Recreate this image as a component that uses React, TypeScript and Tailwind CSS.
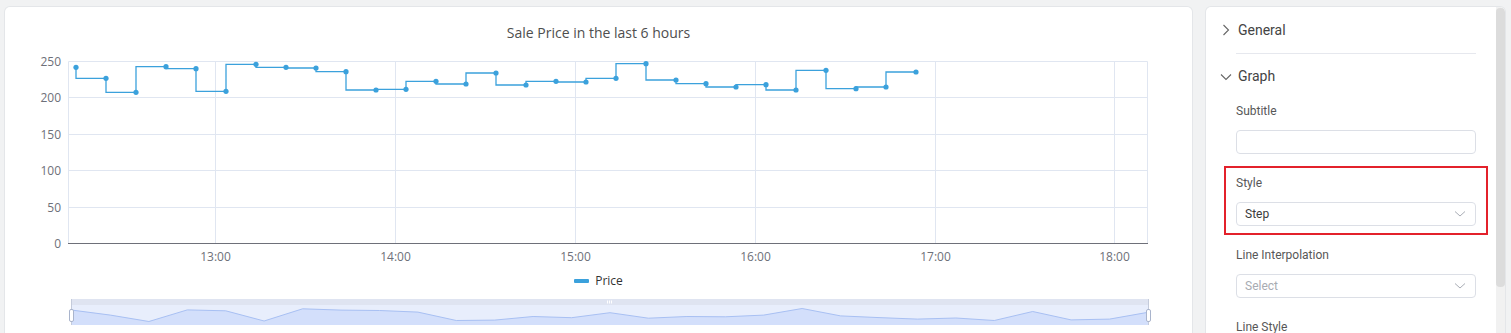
import React from "react";

const ys = [67.3, 78.3, 92.3, 66.7, 68.7, 91.3, 64.3, 67.3, 68, 71.7, 90, 89.3, 81.3, 84, 73, 85, 81.3, 82, 78.3, 63.7, 80, 83.7, 87, 84.7, 90, 70.3, 88.7, 87, 72];
const xs = ys.map((_, i) => 76 + i * 30);

const hLines = [
  { y: 61.5, label: "250" },
  { y: 97.5, label: "200" },
  { y: 134.5, label: "150" },
  { y: 170.5, label: "100" },
  { y: 207.5, label: "50" },
];
const vLines = [
  { x: 215.5, label: "13:00" },
  { x: 395.5, label: "14:00" },
  { x: 575.5, label: "15:00" },
  { x: 755.5, label: "16:00" },
  { x: 935.5, label: "17:00" },
  { x: 1114.5, label: "18:00" },
];

function SelectChevron() {
  return (
    <svg width="12" height="8" viewBox="0 0 12 8" className="shrink-0">
      <polyline points="1,1.5 6,6 11,1.5" fill="none" stroke="#a9adb5" strokeWidth="1" />
    </svg>
  );
}

function FieldLabel({ children }: { children: React.ReactNode }) {
  return <div className="h-[16px] leading-[16px] text-[12px] text-[#575757]">{children}</div>;
}

export default function App() {
  const linePath = ys
    .map((y, i) => (i === 0 ? `M${xs[0]} ${y}` : `V${y}H${xs[i]}`))
    .join("");
  const sx = (i: number) => 72 + i * (1076 / 28);
  const sy = (y: number) => 308.5 + ((y - 63.7) / 28.6) * 13;
  const sliderLine = ys
    .map((y, i) => `${i ? "L" : "M"}${sx(i).toFixed(1)} ${sy(y).toFixed(1)}`)
    .join("");
  const sliderArea = sliderLine + "L1148 325L72 325Z";

  return (
    <div
      className="h-[333px] w-[1511px] overflow-hidden bg-[#f1f2f3] pt-[7px] pl-[5px] flex gap-[14px]"
      style={{ fontFamily: "'Open Sans', 'Liberation Sans', sans-serif" }}
    >
      {/* Chart card */}
      <div className="w-[1187px] h-[360px] shrink-0 bg-white rounded-[5px] ring-1 ring-[#e4e6e9] flex flex-col">
        <div className="pt-[16px] h-[36px] leading-[20px] text-center text-[14px] text-[#4e4e4e]">
          Sale Price in the last 6 hours
        </div>
        <svg width="1187" height="222" className="block">
          <g transform="translate(-5 -43)">
            {hLines.map((l) => (
              <line key={l.y} x1="68.5" x2="1147.5" y1={l.y} y2={l.y} stroke="#e0e6f1" strokeWidth="1" />
            ))}
            <line x1="68.5" x2="68.5" y1="61.5" y2="243.5" stroke="#e0e6f1" />
            {vLines.map((l) => (
              <line key={l.x} x1={l.x} x2={l.x} y1="61.5" y2="243.5" stroke="#e0e6f1" />
            ))}
            <line x1="1147.5" x2="1147.5" y1="61.5" y2="243.5" stroke="#e0e6f1" />
            <line x1="68" x2="1148" y1="243.5" y2="243.5" stroke="#6e7079" strokeWidth="1" />
            {hLines.map((l) => (
              <text key={"t" + l.y} x="61" y={l.y + 4} textAnchor="end" fontSize="12" fill="#6e7079">
                {l.label}
              </text>
            ))}
            <text x="61" y="247.5" textAnchor="end" fontSize="12" fill="#6e7079">
              0
            </text>
            {vLines.map((l) => (
              <text key={"x" + l.x} x={l.x} y="261" textAnchor="middle" fontSize="12" fill="#6e7079">
                {l.label}
              </text>
            ))}
            <path d={linePath} fill="none" stroke="#3ba1dc" strokeWidth="1.3" />
            {ys.map((y, i) => (
              <circle key={i} cx={xs[i]} cy={y} r="2.6" fill="#3ba1dc" />
            ))}
          </g>
        </svg>
        <div className="mt-[8px] h-[16px] flex items-center justify-center gap-[6px]">
          <div className="w-[15px] h-[4px] rounded-[1px] bg-[#3ba1dc]" />
          <span className="text-[12px] leading-[16px] text-[#333]">Price</span>
        </div>
        <svg width="1187" height="32" className="block mt-[8px]">
          <g transform="translate(-5 -297)">
            <rect x="71" y="299" width="1078" height="6" fill="#dfe4f1" />
            <rect x="71" y="305" width="1078" height="20" fill="#e8eefc" />
            <path d={sliderArea} fill="#d3dffb" />
            <path d={sliderLine} fill="none" stroke="#a8c0f3" strokeWidth="1" />
            <line x1="71.5" x2="71.5" y1="299" y2="325" stroke="#c4cbdb" />
            <line x1="1148.5" x2="1148.5" y1="299" y2="325" stroke="#c4cbdb" />
            <line x1="607.5" x2="607.5" y1="300.5" y2="303.5" stroke="#ffffff" />
            <line x1="609.5" x2="609.5" y1="300.5" y2="303.5" stroke="#ffffff" />
            <line x1="611.5" x2="611.5" y1="300.5" y2="303.5" stroke="#ffffff" />
            <rect x="69.5" y="309.5" width="4" height="12" rx="1.5" fill="#ffffff" stroke="#a9b4cc" />
            <rect x="1146.5" y="309.5" width="4" height="12" rx="1.5" fill="#ffffff" stroke="#a9b4cc" />
          </g>
        </svg>
      </div>

      {/* Settings panel */}
      <div
        className="w-[299px] h-[360px] shrink-0 bg-white rounded-[5px] ring-1 ring-[#e4e6e9] flex overflow-hidden"
        style={{ fontFamily: "Roboto, 'Noto Sans', sans-serif" }}
      >
        <div className="w-[290px] shrink-0 flex flex-col">
          <div className="h-[46px] flex items-center pl-[14px] gap-[6px]">
            <svg width="12" height="12" viewBox="0 0 12 12">
              <polyline points="3.5,1 8.5,6 3.5,11" fill="none" stroke="#666" strokeWidth="1.1" />
            </svg>
            <span className="text-[14px] text-[#444]">General</span>
          </div>
          <div className="ml-[30px] mr-[20px] h-px bg-[#e6e8ee]" />
          <div className="h-[45px] flex items-center pl-[14px] gap-[6px]">
            <svg width="12" height="12" viewBox="0 0 12 12">
              <polyline points="1,3.5 6,8.5 11,3.5" fill="none" stroke="#666" strokeWidth="1.1" />
            </svg>
            <span className="text-[14px] text-[#444]">Graph</span>
          </div>
          <div className="pl-[30px] pr-[20px] flex flex-col">
            <div className="mt-[4px]">
              <FieldLabel>Subtitle</FieldLabel>
            </div>
            <div className="mt-[11px] h-[24px] rounded-[4px] border border-[#dcdfe6] bg-white" />
            <div className="mt-[12px] -mx-[12px] border-2 border-[#e3212b] px-[10px] pt-[7px] pb-[7px]">
              <FieldLabel>Style</FieldLabel>
              <div className="mt-[11px] h-[24px] rounded-[4px] border border-[#dcdfe6] bg-white flex items-center justify-between pl-[8px] pr-[9px]">
                <span className="text-[12px] text-[#3a3a3a]">Step</span>
                <SelectChevron />
              </div>
            </div>
            <div className="mt-[12px]">
              <FieldLabel>Line Interpolation</FieldLabel>
            </div>
            <div className="mt-[11px] h-[24px] rounded-[4px] border border-[#dcdfe6] bg-white flex items-center justify-between pl-[8px] pr-[9px]">
              <span className="text-[12px] text-[#a8abb2]">Select</span>
              <SelectChevron />
            </div>
            <div className="mt-[21px]">
              <FieldLabel>Line Style</FieldLabel>
            </div>
          </div>
        </div>
        <div className="w-[9px] shrink-0 bg-[#f1f1f1] pt-[1px]">
          <div className="h-[279px] rounded-[4px] bg-[#dcdcdc]" />
        </div>
      </div>
    </div>
  );
}
